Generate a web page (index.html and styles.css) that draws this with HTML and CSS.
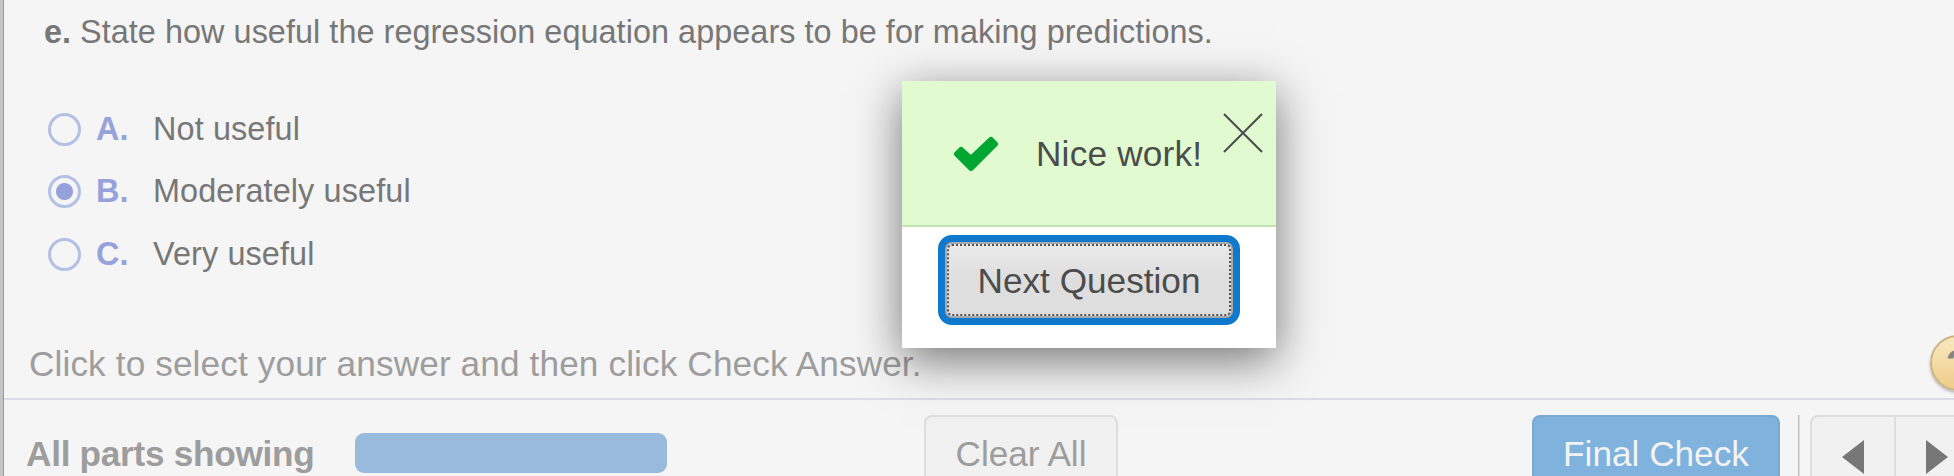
FILE: index.html
```html
<!DOCTYPE html>
<html lang="en">
<head>
<meta charset="utf-8">
<title>Question</title>
<link rel="stylesheet" href="styles.css">
</head>
<body>
<div class="app">
  <main class="question">
    <p class="prompt"><b>e.</b> <span class="prompt-text">State how useful the regression equation appears to be for making predictions.</span></p>
    <div class="choices">
      <div class="choice"><span class="radio"></span><b class="letter">A.</b><span class="label">Not useful</span></div>
      <div class="choice"><span class="radio radio-on"></span><b class="letter">B.</b><span class="label">Moderately useful</span></div>
      <div class="choice"><span class="radio"></span><b class="letter">C.</b><span class="label">Very useful</span></div>
    </div>
  </main>
  <div class="hint">
    <span class="hint-text">Click to select your answer and then click Check Answer.</span>
    <span class="help">?</span>
  </div>
  <footer class="bar">
    <b class="parts">All parts showing</b>
    <span class="progress"></span>
    <span class="btn clear">Clear All</span>
    <span class="btn final">Final Check</span>
    <span class="rule"></span>
    <span class="pager">
      <span class="page"><svg width="22" height="34" viewBox="0 0 22 34"><path d="M22 0v34L0 17z" fill="#777"/></svg></span>
      <span class="page next"><svg width="22" height="34" viewBox="0 0 22 34"><path d="M0 0v34l22-17z" fill="#777"/></svg></span>
    </span>
  </footer>
  <section class="popup">
    <div class="popup-head">
      <svg class="check" width="46" height="36" viewBox="0 0 46 36"><path d="M8 14L4 18L18 32L42 8L38 4L18 23z" fill="#00a632" stroke="#00a632" stroke-width="6" stroke-linejoin="round"/></svg>
      <span class="message">Nice work!</span>
      <svg class="close" width="40" height="40" viewBox="0 0 40 40"><path d="M1 1l38 38M39 1L1 39" stroke="#4c4c4c" stroke-width="2"/></svg>
    </div>
    <div class="popup-body"><button class="next-question"><span>Next Question</span></button></div>
  </section>
</div>
</body>
</html>
```
FILE: styles.css
```css
* { box-sizing: border-box; }
body { margin: 0; overflow: hidden; font-family: "Liberation Sans", Arial, sans-serif; }
.app {
  position: relative;
  width: 1954px;
  height: 476px;
  overflow: hidden;
  display: flex;
  flex-direction: column;
  background: #f5f5f5;
  border-left: 3px solid #c4c4c4;
  box-shadow: inset 1px 0 #999;
  padding-left: 1px;
  white-space: nowrap;
}
.question { flex: none; height: 331px; padding: 13px 0 0 40px; font-size: 32.4px; color: #777; }
.prompt { margin: 0; line-height: 38px; }
.prompt-text { letter-spacing: .05px; }
.choices { display: flex; flex-direction: column; margin-top: 47px; }
.choice { display: flex; align-items: center; height: 62.5px; padding-left: 4px; }
.radio {
  width: 33px;
  height: 33px;
  border: 3px solid #b4bfe6;
  border-radius: 50%;
  margin-right: 15px;
}
.radio-on { background: radial-gradient(circle, #95a2dc 8px, transparent 9px); }
.letter { width: 57px; color: #95a2dc; }
.label { letter-spacing: .12px; }
.hint {
  flex: none;
  display: flex;
  justify-content: space-between;
  height: 69px;
  padding-left: 25px;
  border-bottom: 2px solid #dadde6;
  font-size: 35.2px;
  line-height: 65px;
  color: #9d9d9d;
}
.hint-text { letter-spacing: .12px; }
.help {
  flex: none;
  width: 56px;
  height: 56px;
  margin: 4px -32px 0 0;
  border: 2px solid #ccb582;
  border-radius: 50%;
  background: linear-gradient(#f7eac0, #efcc8b);
  box-shadow: 0 2px 3px rgba(0, 0, 0, .25);
  font-size: 40px;
  font-weight: bold;
  line-height: 54px;
  text-align: center;
  color: #858585;
}
.bar { display: flex; flex: none; height: 94px; padding: 15px 0 0 22px; font-size: 35.2px; color: #9d9d9d; }
.bar > * { flex: none; }
.parts { width: 329px; line-height: 78px; letter-spacing: -.28px; }
.progress { width: 312px; height: 40px; margin-top: 18px; border-radius: 9px; background: #98badc; }
.btn { height: 80px; border: 2px solid #dedede; border-radius: 8px; line-height: 73px; text-align: center; }
.clear { width: 194px; margin-left: 257px; background: #f1f1f1; }
.final { width: 248px; margin-left: 414px; border-color: #79a9d0; background: #7fb2dc; color: #f3f3f3; }
.rule { width: 2px; height: 80px; margin-left: 18px; background: linear-gradient(90deg, #bbb 50%, #ddd 50%); }
.pager { display: flex; width: 168px; height: 80px; margin-left: 10px; border: 2px solid #dedede; border-radius: 8px; background: #f1f1f1; }
.page { flex: none; width: 82px; padding: 23px 0 0 30px; line-height: 0; }
.next { border-left: 2px solid #dedede; }
.popup {
  position: absolute;
  left: 899px;
  top: 81px;
  width: 374px;
  height: 267px;
  background: #fff;
  box-shadow: 0 12px 44px rgba(0, 0, 0, .53);
  color: #4c4c4c;
  font-size: 35.2px;
}
.popup-head { display: flex; height: 146px; padding-left: 51px; background: #e1fad0; border-bottom: 2px solid #c3e4b0; }
.check { margin-top: 55px; }
.message { width: 183px; margin-left: 37px; line-height: 145px; letter-spacing: .2px; }
.close { margin: 32px 0 0 4px; }
.popup-body { padding: 8px 36px; }
.next-question {
  display: block;
  width: 302px;
  height: 90px;
  padding: 0;
  border: 7px solid #0f79cd;
  border-radius: 14px;
  background: #aaa;
  font: inherit;
  color: inherit;
}
.next-question span {
  display: block;
  height: 72px;
  margin: 0 2px;
  border: 2px dotted #555;
  border-radius: 5px;
  background: linear-gradient(#eaeaea, #dedede 50%) border-box;
  line-height: 69px;
}
```
